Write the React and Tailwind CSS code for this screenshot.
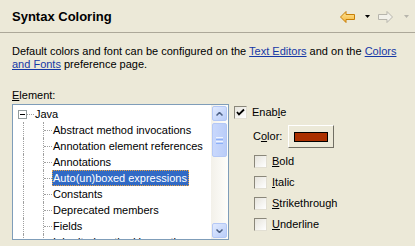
import React from "react";

const Back = () => (
  <svg width="15" height="12" viewBox="0 0 15 12">
    <defs>
      <linearGradient id="bg" x1="0" y1="0" x2="0" y2="1">
        <stop offset="0" stopColor="#FFE89A" />
        <stop offset="1" stopColor="#F4B43A" />
      </linearGradient>
    </defs>
    <path d="M0.5 6 L6 0.5 L6 3.5 L14.5 3.5 L14.5 8.5 L6 8.5 L6 11.5 Z" fill="url(#bg)" stroke="#C77F08" strokeWidth="1" strokeLinejoin="miter" />
  </svg>
);
const Fwd = () => (
  <svg width="15" height="12" viewBox="0 0 15 12">
    <path d="M14.5 6 L9 0.5 L9 3.5 L0.5 3.5 L0.5 8.5 L9 8.5 L9 11.5 Z" fill="#F2F1EA" stroke="#B7B5AC" strokeWidth="1" />
  </svg>
);
const Drop = ({ c }) => (
  <svg width="5" height="3" viewBox="0 0 5 3">
    <polygon points="0,0 5,0 2.5,3" fill={c} />
  </svg>
);

const Check = ({ checked }) => (
  <div className="w-[13px] h-[13px] border border-t-[#8a877a] border-l-[#8a877a] border-r-[#e2dfd3] border-b-[#e2dfd3] bg-gradient-to-br from-[#e6e4dc] to-white flex items-center justify-center shrink-0">
    {checked && (
      <svg width="9" height="9" viewBox="0 0 9 9">
        <path d="M1 4 L3 6.5 L8 1.5" fill="none" stroke="#000" strokeWidth="1.8" />
      </svg>
    )}
  </div>
);

const children = [
  "Abstract method invocations",
  "Annotation element references",
  "Annotations",
  "Auto(un)boxed expressions",
  "Constants",
  "Deprecated members",
  "Fields",
  "Inherited method invocations",
];

export default function App() {
  return (
    <div className="w-[415px] h-[246px] bg-[#ECE9D8] overflow-hidden text-[11px] text-black font-['Liberation_Sans',Arial,sans-serif]">
      <div className="h-[33px] flex items-center justify-between pl-[12px] pr-[6px] border-b border-[#ACA899]">
        <div className="text-[13px] font-bold pt-[2px]">Syntax Coloring</div>
        <div className="flex items-center pt-[1px]">
          <Back />
          <div className="ml-[10px] mr-[8px]"><Drop c="#000" /></div>
          <Fwd />
          <div className="ml-[11px]"><Drop c="#B7B5AC" /></div>
        </div>
      </div>
      <div className="px-[12px] pt-[12px] leading-[13px]">
        <p>
          Default colors and font can be configured on the{" "}
          <span className="text-[#1638A6] underline">Text Editors</span> and on the{" "}
          <span className="text-[#1638A6] underline">Colors and Fonts</span> preference page.
        </p>
        <div className="mt-[18px]"><span className="underline">E</span>lement:</div>
      </div>
      <div className="flex pl-[12px] mt-[2px]">
        <div className="w-[217px] h-[136px] border border-[#7F9DB9] bg-white flex">
          <div className="flex-1 overflow-hidden pt-[1px]">
            <div className="h-[16px] flex items-center">
              <div className="w-[5px]" />
              <div className="w-[9px] h-[9px] border border-[#919B9C] bg-white flex items-center justify-center">
                <div className="w-[5px] h-[1px] bg-[#000]" />
              </div>
              <div className="w-[7px] border-t border-dotted border-[#A0A0A0]" />
              <span className="pl-[1px]">Java</span>
            </div>
            {children.map((c) => (
              <div key={c} className="h-[16px] flex">
                <div className="w-[10px]" />
                <div className="w-[20px] border-l border-dotted border-[#A0A0A0]" />
                <div className="w-[9px] border-l border-dotted border-[#A0A0A0] flex items-center">
                  <div className="w-full border-t border-dotted border-[#A0A0A0]" />
                </div>
                {c === "Auto(un)boxed expressions" ? (
                  <span className="h-[16px] flex items-center pl-[1px] pr-[2px] bg-[#316AC5] text-white outline outline-1 outline-dotted outline-[#E8A040] -outline-offset-1 whitespace-nowrap">
                    {c}
                  </span>
                ) : (
                  <span className="h-[16px] flex items-center pl-[1px] whitespace-nowrap">{c}</span>
                )}
              </div>
            ))}
          </div>
          <div className="w-[17px] bg-gradient-to-r from-[#F3F1EA] to-[#FEFEFB] flex flex-col p-[1px]">
            <div className="h-[15px] rounded-[2px] border border-[#B4C8F6] bg-gradient-to-br from-[#E1EAFE] to-[#B9CDF9] flex items-center justify-center">
              <svg width="7" height="4" viewBox="0 0 7 4"><path d="M0.5 3.5 L3.5 0.5 L6.5 3.5" fill="none" stroke="#4D6185" strokeWidth="1.5" /></svg>
            </div>
            <div className="mt-[2px] h-[34px] rounded-[2px] border border-[#B4C8F6] bg-gradient-to-r from-[#C9D8FC] to-[#BACDF9] flex flex-col items-center justify-center gap-[1px]">
              <div className="w-[7px] h-[1px] bg-[#EEF4FE]" />
              <div className="w-[7px] h-[1px] bg-[#8CB0F8]" />
              <div className="w-[7px] h-[1px] bg-[#EEF4FE]" />
              <div className="w-[7px] h-[1px] bg-[#8CB0F8]" />
            </div>
            <div className="flex-1" />
            <div className="h-[15px] rounded-[2px] border border-[#B4C8F6] bg-gradient-to-br from-[#E1EAFE] to-[#B9CDF9] flex items-center justify-center">
              <svg width="7" height="4" viewBox="0 0 7 4"><path d="M0.5 0.5 L3.5 3.5 L6.5 0.5" fill="none" stroke="#4D6185" strokeWidth="1.5" /></svg>
            </div>
          </div>
        </div>
        <div className="pl-[5px] pt-[2px] flex flex-col">
          <div className="flex items-center gap-[5px] h-[13px]">
            <Check checked />
            <span>Enab<span className="underline">l</span>e</span>
          </div>
          <div className="flex items-center mt-[6px] pl-[19px]">
            <span className="w-[35px]">C<span className="underline">o</span>lor:</span>
            <div className="w-[46px] h-[23px] border border-t-white border-l-white border-r-[#716F64] border-b-[#716F64] bg-[#ECE9D8] flex items-center justify-center">
              <div className="w-[34px] h-[10px] border border-black bg-[#AB3000]" />
            </div>
          </div>
          <div className="flex flex-col pl-[20px] mt-[7px] gap-[8px]">
            {["Bold", "Italic", "Strikethrough", "Underline"].map((t) => (
              <div key={t} className="flex items-center gap-[5px] h-[13px]">
                <Check />
                <span><span className="underline">{t[0]}</span>{t.slice(1)}</span>
              </div>
            ))}
          </div>
        </div>
      </div>
    </div>
  );
}
